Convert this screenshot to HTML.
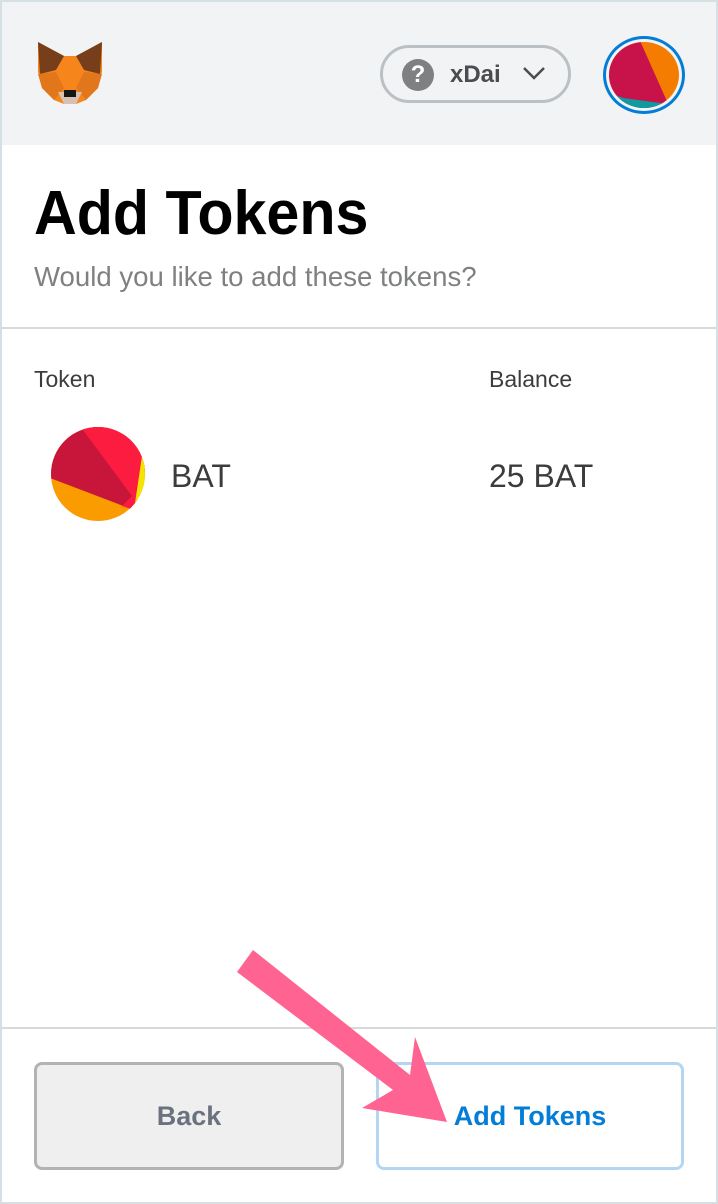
<!DOCTYPE html>
<html><head><meta charset="utf-8"><style>
*{margin:0;padding:0;box-sizing:border-box}
body{width:718px;height:1204px;background:#fff;font-family:"Liberation Sans",Roboto,sans-serif;position:relative;overflow:hidden}
.frame{position:absolute;inset:0;border:2px solid #d6e0e4}
.hdr{position:absolute;left:2px;top:2px;right:2px;height:143px;background:#f2f3f4}
.pill{position:absolute;left:380px;top:45px;width:191px;height:58px;border:3px solid #bbc0c5;border-radius:29px;background:#f2f3f4}
.q{position:absolute;left:402px;top:59px;width:32px;height:32px;border-radius:50%;background:#7f8082;color:#fff;font-weight:bold;font-size:24px;text-align:center;line-height:32px}
.net{position:absolute;left:450px;top:61px;font-size:24px;font-weight:bold;color:#4a4c50}
.av{position:absolute;left:603px;top:36px;width:82px;height:78px;border:3px solid #037dd6;border-radius:50%}
h1{position:absolute;left:34px;top:178px;font-size:62px;font-weight:bold;color:#000;transform:scaleX(0.955);transform-origin:left}
.sub{position:absolute;left:34px;top:261px;font-size:28px;color:#7f8082;transform:scaleX(0.985);transform-origin:left}
.line{position:absolute;left:2px;right:2px;height:2px;background:#d6dadf}
.lbl{position:absolute;top:366px;font-size:23px;color:#3c3c3c}
.tok{position:absolute;top:458px;font-size:32px;color:#3c3c3c}
.btn{position:absolute;top:1062px;height:108px;border-radius:8px;font-size:27px;font-weight:bold;text-align:center;line-height:102px}
</style></head><body>
<div class="frame"></div>
<div class="hdr"></div>
<svg style="position:absolute;left:36px;top:42px" width="68" height="64" viewBox="0 0 68 64">
<polygon points="2,0 28,14 40,14 66,0 66,30 62,46 50,58 40,62 28,62 18,58 6,46 2,30" fill="#f6851b"/>
<polygon points="2,0 28,14 20,28 4,32" fill="#763e1a"/>
<polygon points="66,0 40,14 48,28 64,32" fill="#763e1a"/>
<polygon points="2,32 20,30 28,46 18,58 6,46" fill="#e2761b"/>
<polygon points="66,32 48,30 40,46 50,58 62,46" fill="#e2761b"/>
<polygon points="22,50 46,50 40,62 28,62" fill="#d7c1b3"/>
<rect x="28" y="48" width="12" height="7" fill="#161616"/>
</svg>
<div class="pill"></div>
<div class="q">?</div>
<div class="net">xDai</div>
<svg style="position:absolute;left:522px;top:66px" width="24" height="14"><path d="M2 2 L12 12 L22 2" stroke="#4a4c50" stroke-width="2.5" fill="none"/></svg>
<div class="av"></div>
<svg style="position:absolute;left:609px;top:42px" width="70" height="66" viewBox="0 0 64 62" preserveAspectRatio="none"><defs><clipPath id="c"><ellipse cx="32" cy="31" rx="32" ry="31"/></clipPath></defs><g clip-path="url(#c)"><rect width="64" height="62" fill="#f47c00"/><polygon points="0,10 28,-2 54,58 46,64 0,64" fill="#c8134a"/><polygon points="0,48 46,64 0,64" fill="#0f9aa0"/><polygon points="8,52 52,58 44,66 8,66" fill="#0f9aa0"/></g></svg>
<h1>Add Tokens</h1>
<div class="sub">Would you like to add these tokens?</div>
<div class="line" style="top:327px"></div>
<div class="lbl" style="left:34px">Token</div>
<div class="lbl" style="left:489px">Balance</div>
<svg style="position:absolute;left:50px;top:426px" width="96" height="96" viewBox="0 0 96 96"><defs><clipPath id="d"><circle cx="48" cy="48" r="47"/></clipPath></defs><g clip-path="url(#d)"><rect width="96" height="96" fill="#fa9b00"/><polygon points="0,0 96,0 98,40 84,84 0,52" fill="#c8163a"/><polygon points="30,0 96,0 98,40 84,84 72,80 82,70" fill="#fc1c40"/><polygon points="92,30 100,40 100,80 84,84" fill="#f5e400"/></g></svg>
<div class="tok" style="left:171px">BAT</div>
<div class="tok" style="left:489px">25 BAT</div>
<div class="line" style="top:1027px"></div>
<div class="btn" style="left:34px;width:310px;background:#efefef;border:3px solid #b3b3b3;color:#6a737d">Back</div>
<div class="btn" style="left:376px;width:308px;background:#fff;border:3px solid #b3d7f2;color:#037dd6">Add Tokens</div>
<svg style="position:absolute;left:0;top:0" width="718" height="1204"><polygon points="253,950 410,1075 415,1037 447,1122 362,1108 393,1090 237,972" fill="#ff6392"/></svg>
</body></html>
